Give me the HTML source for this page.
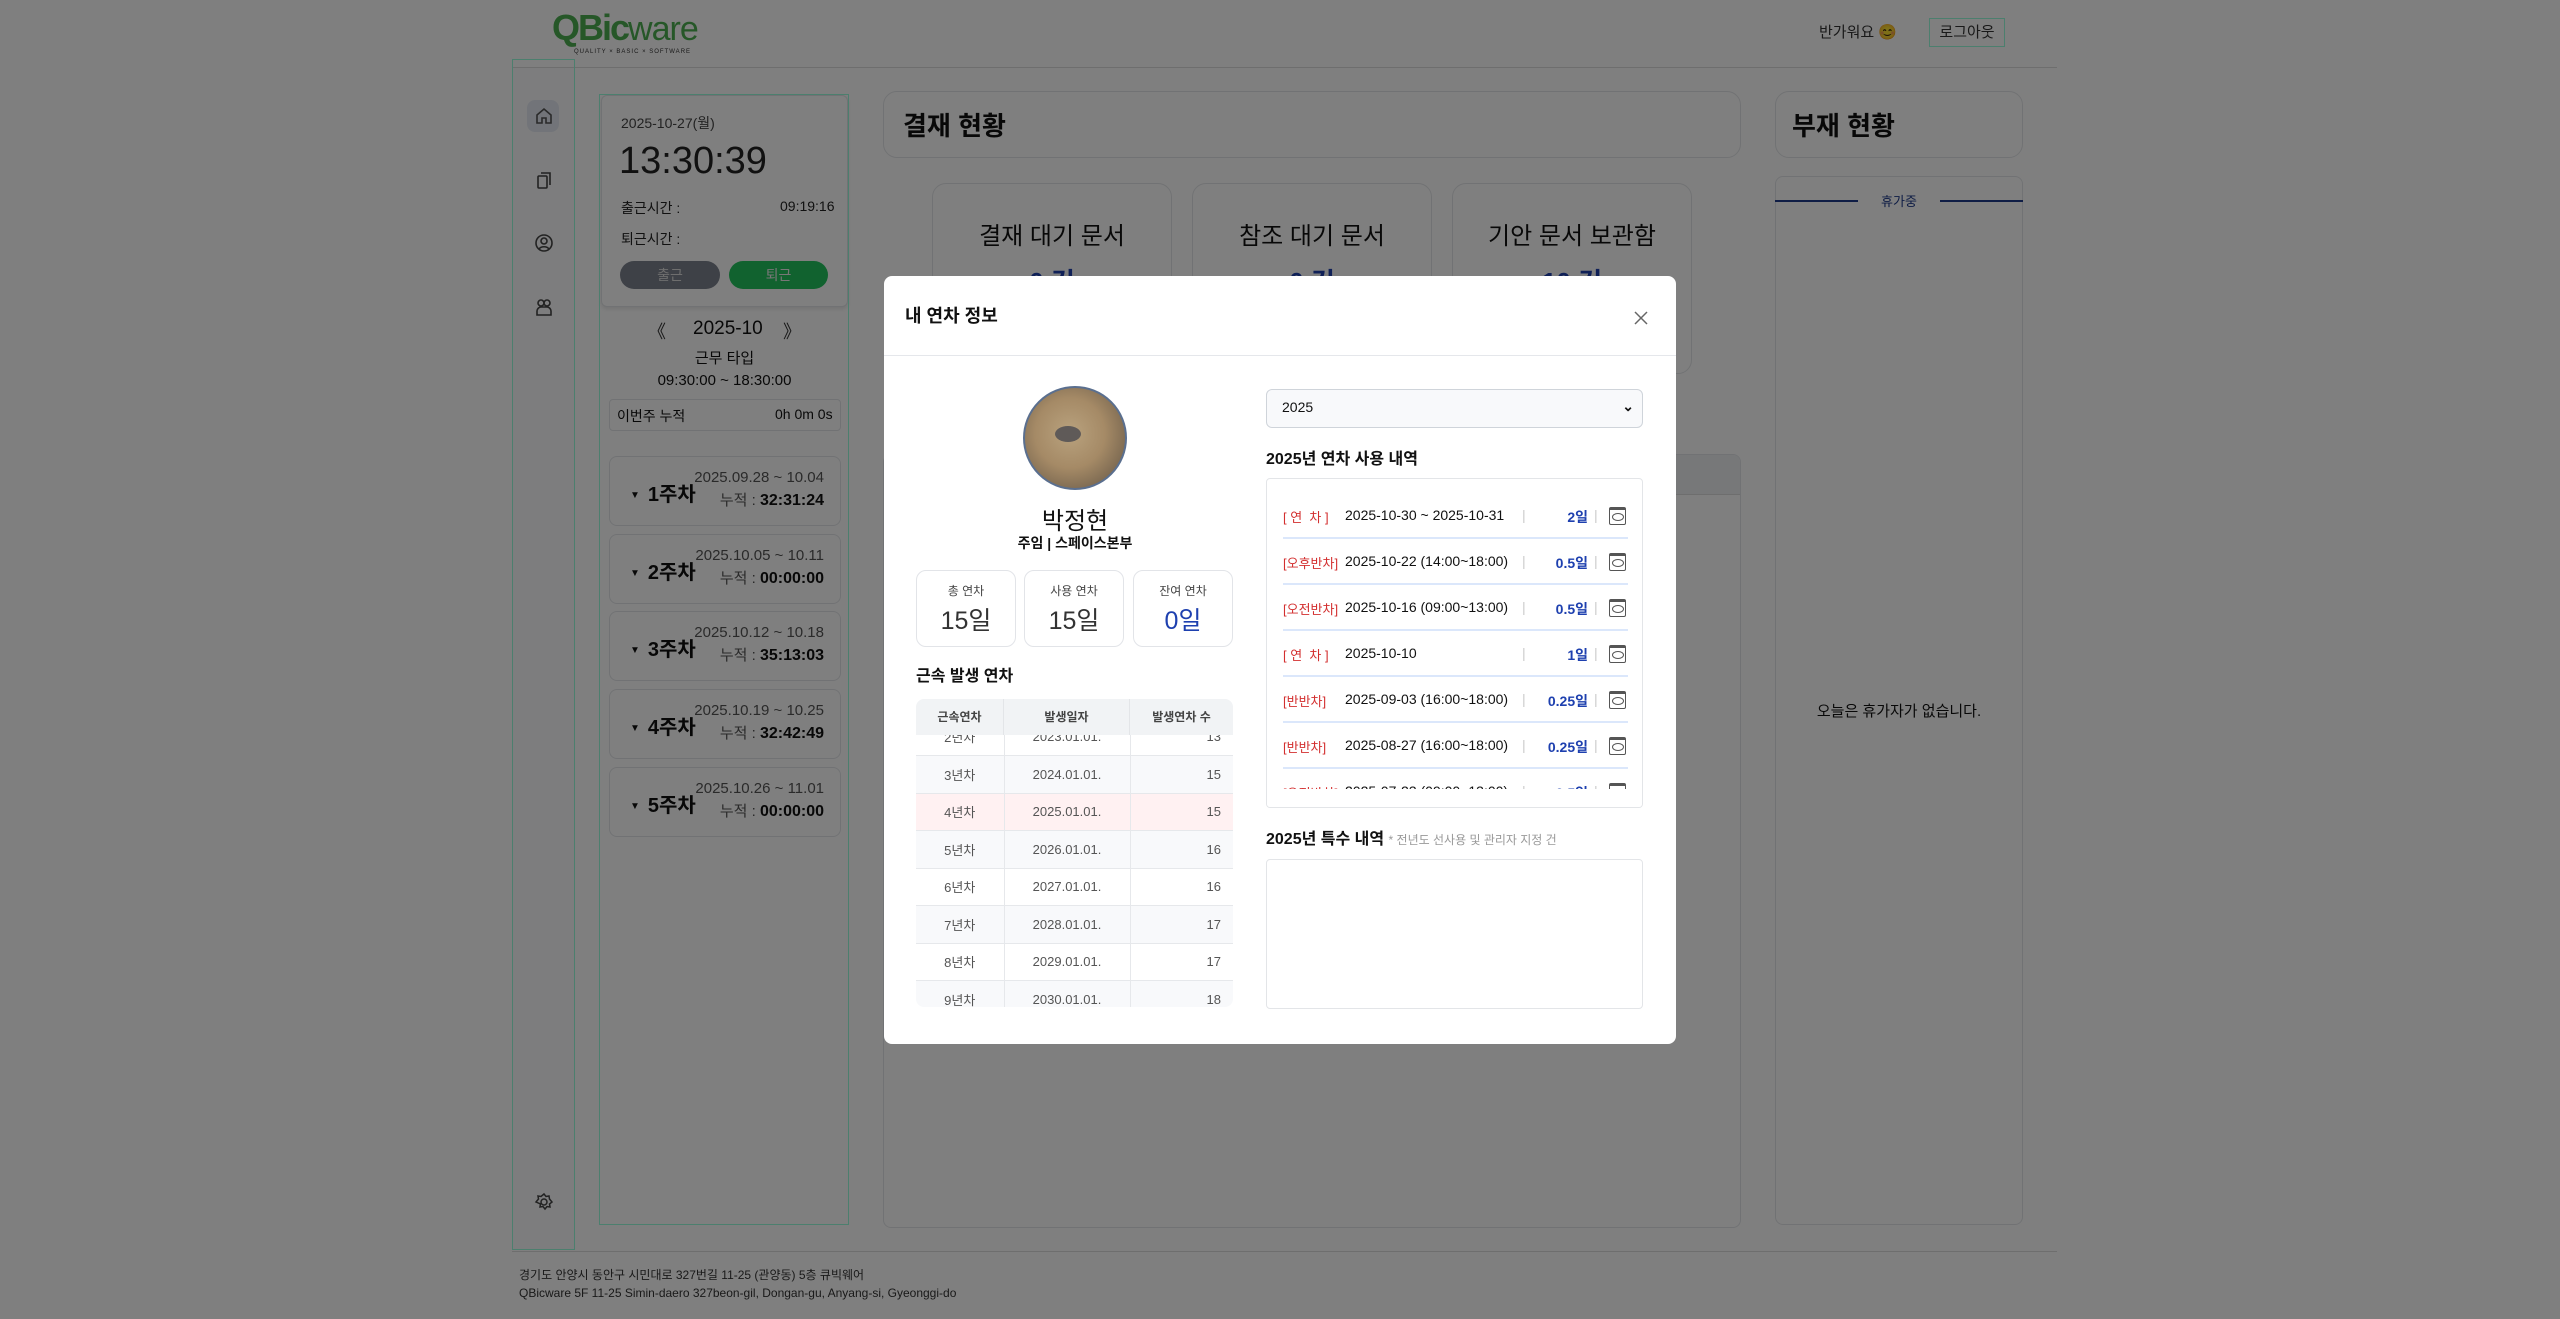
<!DOCTYPE html>
<html><head><meta charset="utf-8"><style>
*{box-sizing:border-box;margin:0;padding:0}
body{width:2560px;height:1319px;position:relative;overflow:hidden;background:#fff;font-family:"Liberation Sans","Noto Sans CJK KR",sans-serif;color:#111}
.a{position:absolute}
.card{position:absolute;border:1px solid #e3e5e8;border-radius:14px;background:#fff}
.ov{position:absolute;left:0;top:0;width:2560px;height:1319px;background:rgba(0,0,0,.5)}
.c{text-align:center}
.wk{position:absolute;left:609px;width:232px;height:70px;border:1px solid #e3e5e8;border-radius:8px;background:#fff}
.wk .t{position:absolute;left:20px;top:21px;font-size:20px;font-weight:bold}
.wk .t i{font-style:normal;font-size:10px;vertical-align:middle;margin-right:8px}
.wk .d{position:absolute;right:16px;top:9px;font-size:15px;color:#555;text-align:right;line-height:23px}
.wk .d b{font-size:16px;color:#111}
.m{position:absolute;left:884px;top:276px;width:792px;height:768px;background:#fff;border-radius:8px}
.st{position:absolute;top:294px;width:100px;height:77px;border:1px solid #e2e4e8;border-radius:10px;text-align:center}
.st .l{font-size:12px;color:#444;margin-top:11px}
.st .v{font-size:25px;color:#333;margin-top:2px}
table{border-collapse:collapse;width:317px;font-size:13px;color:#555}
td{height:37.5px;border-right:1px solid #e6e8eb;border-bottom:1px solid #e6e8eb;text-align:center}
td:last-child{border-right:none;text-align:right;padding-right:12px}
.row{position:absolute;left:16px;width:345px;height:46px;font-size:14px;border-bottom:2px solid #dbe7fb}
.row span{position:absolute;top:14px;white-space:nowrap}
.tag{left:0;color:#d32f2f;font-size:13px}
.dt{left:62px;color:#111}
.p1{left:239px;color:#ccc}
.dy{right:40px;color:#1e40af;font-weight:bold}
.p2{left:311px;color:#ccc}
.eye{position:absolute;left:326px;top:14px;width:17px;height:18px;border:1.5px solid #555;border-radius:2px;border-top-width:3px}
.eye:after{content:"";position:absolute;left:2px;top:3px;width:10px;height:6px;border:1.3px solid #555;border-radius:50%}
</style></head><body>
<!-- header -->
<div class="a" style="left:552px;top:8px;width:160px;height:46px;white-space:nowrap">
<span style="font-size:36px;color:#4caf50;font-weight:bold;letter-spacing:-2px;line-height:40px">QBic</span><span style="font-size:34px;color:#4caf50;line-height:40px;letter-spacing:-1px">ware</span>
<div style="font-size:6px;color:#333;margin-left:22px;letter-spacing:1px">QUALITY × BASIC × SOFTWARE</div></div>
<div class="a" style="left:1819px;top:21px;font-size:15px;color:#333">반가워요 😊</div>
<div class="a" style="left:1929px;top:18px;width:76px;height:29px;border:1px solid #9fd;font-size:15px;color:#333;text-align:center;line-height:27px">로그아웃</div>
<div class="a" style="left:512px;top:67px;width:1545px;height:1px;background:#ddd"></div>
<!-- sidebar -->
<div class="a" style="left:513px;top:68px;width:62px;height:1182px;background:#fafbfc;border-right:1px solid #e5e7eb"></div>
<div class="a" style="left:527px;top:100px;width:32px;height:32px;border-radius:8px;background:#e4e9f2"></div>
<svg class="a" style="left:534px;top:106px" width="20" height="20" viewBox="0 0 20 20" fill="none" stroke="#555" stroke-width="1.6"><path d="M3 9L10 3l7 6v8H12v-5H8v5H3z"/></svg>
<svg class="a" style="left:534px;top:170px" width="20" height="20" viewBox="0 0 20 20" fill="none" stroke="#444" stroke-width="1.6"><rect x="4" y="6" width="9" height="12" rx="1"/><path d="M7 3h9v12"/></svg>
<svg class="a" style="left:534px;top:233px" width="20" height="20" viewBox="0 0 20 20" fill="none" stroke="#444" stroke-width="1.6"><circle cx="10" cy="10" r="8"/><circle cx="10" cy="8" r="3"/><path d="M5 16c2-3 8-3 10 0"/></svg>
<svg class="a" style="left:534px;top:297px" width="20" height="20" viewBox="0 0 20 20" fill="none" stroke="#444" stroke-width="1.6"><circle cx="7" cy="6" r="3"/><circle cx="13" cy="6" r="3"/><path d="M3 18v-4c0-2 2-4 4-4h6c2 0 4 2 4 4v4z"/></svg>
<svg class="a" style="left:534px;top:1192px" width="20" height="20" viewBox="0 0 20 20" fill="none" stroke="#444" stroke-width="1.5"><circle cx="10" cy="10" r="3"/><path d="M10 2l2 2.5 3-.5.5 3L18 10l-2.5 2 .5 3-3-.5-2 2.5-2-2.5-3 .5.5-3L2 10l2.5-3-.5-3 3 .5z"/></svg>
<!-- middle panel -->
<div class="card" style="left:601px;top:95px;width:247px;height:212px;border-radius:6px;box-shadow:0 2px 4px rgba(0,0,0,.1)"></div>
<div class="a" style="left:621px;top:113px;font-size:14px;color:#444">2025-10-27(월)</div>
<div class="a" style="left:619px;top:140px;font-size:38px;color:#222">13:30:39</div>
<div class="a" style="left:621px;top:198px;font-size:14px;color:#222">출근시간 :</div>
<div class="a" style="left:780px;top:198px;font-size:14px;color:#222">09:19:16</div>
<div class="a" style="left:621px;top:229px;font-size:14px;color:#222">퇴근시간 :</div>
<div class="a c" style="left:620px;top:261px;width:100px;height:28px;border-radius:14px;background:#7c828e;color:#ddd;font-size:14px;line-height:28px">출근</div>
<div class="a c" style="left:729px;top:261px;width:99px;height:28px;border-radius:14px;background:#22c55e;color:#eee;font-size:14px;line-height:28px">퇴근</div>
<div class="a" style="left:648px;top:318px;font-size:18px;color:#333">《</div>
<div class="a" style="left:693px;top:318px;font-size:19px;color:#111">2025-10</div>
<div class="a" style="left:783px;top:318px;font-size:18px;color:#333">》</div>
<div class="a c" style="left:601px;top:347px;width:247px;font-size:15px">근무 타입</div>
<div class="a c" style="left:601px;top:372px;width:247px;font-size:15px">09:30:00 ~ 18:30:00</div>
<div class="a" style="left:609px;top:399px;width:232px;height:32px;border:1px solid #e3e5e8;border-radius:4px"></div>
<div class="a" style="left:617px;top:406px;font-size:14px">이번주 누적</div>
<div class="a" style="left:775px;top:406px;font-size:14px">0h 0m 0s</div>
<div class="wk" style="top:456px"><span class="t"><i>▼</i>1주차</span><div class="d">2025.09.28 ~ 10.04<br>누적 : <b>32:31:24</b></div></div>
<div class="wk" style="top:534px"><span class="t"><i>▼</i>2주차</span><div class="d">2025.10.05 ~ 10.11<br>누적 : <b>00:00:00</b></div></div>
<div class="wk" style="top:611px"><span class="t"><i>▼</i>3주차</span><div class="d">2025.10.12 ~ 10.18<br>누적 : <b>35:13:03</b></div></div>
<div class="wk" style="top:689px"><span class="t"><i>▼</i>4주차</span><div class="d">2025.10.19 ~ 10.25<br>누적 : <b>32:42:49</b></div></div>
<div class="wk" style="top:767px"><span class="t"><i>▼</i>5주차</span><div class="d">2025.10.26 ~ 11.01<br>누적 : <b>00:00:00</b></div></div>
<div class="a" style="left:599px;top:94px;width:250px;height:1131px;border:1px solid #9fd"></div>
<div class="a" style="left:512px;top:59px;width:63px;height:1191px;border:1px solid #9fd"></div>
<!-- main -->
<div class="card" style="left:883px;top:91px;width:858px;height:67px"></div>
<div class="a" style="left:903px;top:106px;font-size:26px;font-weight:bold">결재 현황</div>
<div class="card" style="left:932px;top:183px;width:240px;height:191px"></div>
<div class="card" style="left:1192px;top:183px;width:240px;height:191px"></div>
<div class="card" style="left:1452px;top:183px;width:240px;height:191px"></div>
<div class="a c" style="left:932px;top:216px;width:240px;font-size:24px">결재 대기 문서</div>
<div class="a c" style="left:1192px;top:216px;width:240px;font-size:24px">참조 대기 문서</div>
<div class="a c" style="left:1452px;top:216px;width:240px;font-size:24px">기안 문서 보관함</div>
<div class="a c" style="left:932px;top:262px;width:240px;font-size:26px;color:#1e40af;font-weight:bold">0 건</div>
<div class="a c" style="left:1192px;top:262px;width:240px;font-size:26px;color:#1e40af;font-weight:bold">0 건</div>
<div class="a c" style="left:1452px;top:262px;width:240px;font-size:26px;color:#1e40af;font-weight:bold">10 건</div>
<div class="card" style="left:883px;top:454px;width:858px;height:774px;border-radius:8px;overflow:hidden"><div style="height:40px;background:#eef0f3;border-bottom:1px solid #ddd"></div></div>
<div class="card" style="left:1775px;top:91px;width:248px;height:67px"></div>
<div class="a" style="left:1792px;top:106px;font-size:26px;font-weight:bold">부재 현황</div>
<div class="card" style="left:1775px;top:176px;width:248px;height:1049px;border-radius:8px"></div>
<div class="a" style="left:1775px;top:200px;width:83px;height:2px;background:#1e3a8a"></div>
<div class="a" style="left:1940px;top:200px;width:83px;height:2px;background:#1e3a8a"></div>
<div class="a c" style="left:1858px;top:191px;width:82px;font-size:13px;color:#1e3a8a">휴가중</div>
<div class="a c" style="left:1775px;top:700px;width:248px;font-size:15px">오늘은 휴가자가 없습니다.</div>
<!-- footer -->
<div class="a" style="left:512px;top:1251px;width:1545px;height:1px;background:#ddd"></div>
<div class="a" style="left:519px;top:1266px;font-size:12px;color:#333;line-height:18px">경기도 안양시 동안구 시민대로 327번길 11-25 (관양동) 5층 큐빅웨어<br>QBicware 5F 11-25 Simin-daero 327beon-gil, Dongan-gu, Anyang-si, Gyeonggi-do</div>
<div class="ov"></div>
<!-- modal -->
<div class="m">
<div class="a" style="left:21px;top:26px;font-size:18px;font-weight:bold">내 연차 정보</div>
<svg class="a" style="left:749px;top:34px" width="16" height="16" viewBox="0 0 16 16" stroke="#666" stroke-width="1.5"><path d="M2 2l12 12M14 2L2 14"/></svg>
<div class="a" style="left:0;top:79px;width:792px;height:1px;background:#e5e7eb"></div>
<div class="a" style="left:139px;top:110px;width:104px;height:104px;border-radius:50%;border:2px solid #5a6f8f;background:radial-gradient(circle at 45% 45%,#b9a27e 0,#a58a66 45%,#7d6a52 75%,#4d5a3e 100%)"></div>
<div class="a" style="left:171px;top:150px;width:26px;height:16px;border-radius:50%;background:#5f5a58"></div>
<div class="a c" style="left:0;top:225px;width:382px;font-size:24px">박정현</div>
<div class="a c" style="left:0;top:257px;width:382px;font-size:14px;font-weight:bold">주임 | 스페이스본부</div>
<div class="st" style="left:32px"><div class="l">총 연차</div><div class="v">15일</div></div>
<div class="st" style="left:140px"><div class="l">사용 연차</div><div class="v">15일</div></div>
<div class="st" style="left:249px"><div class="l">잔여 연차</div><div class="v" style="color:#1e40af">0일</div></div>
<div class="a" style="left:32px;top:386px;font-size:16px;font-weight:bold">근속 발생 연차</div>
<div class="a" style="left:32px;top:423px;width:317px;height:308px;border-radius:8px;overflow:hidden">
<div style="position:absolute;top:36px;left:0;width:317px;height:272px;overflow:hidden"><table style="position:absolute;top:-17px">
<colgroup><col style="width:88px"><col style="width:126px"><col style="width:103px"></colgroup>
<tr style="background:#fff"><td>2년차</td><td>2023.01.01.</td><td>13</td></tr>
<tr style="background:#f8f9fb"><td>3년차</td><td>2024.01.01.</td><td>15</td></tr>
<tr style="background:#fff1f2"><td>4년차</td><td>2025.01.01.</td><td>15</td></tr>
<tr style="background:#f8f9fb"><td>5년차</td><td>2026.01.01.</td><td>16</td></tr>
<tr style="background:#fff"><td>6년차</td><td>2027.01.01.</td><td>16</td></tr>
<tr style="background:#f8f9fb"><td>7년차</td><td>2028.01.01.</td><td>17</td></tr>
<tr style="background:#fff"><td>8년차</td><td>2029.01.01.</td><td>17</td></tr>
<tr style="background:#f8f9fb"><td>9년차</td><td>2030.01.01.</td><td>18</td></tr>
</table></div>
<div style="position:absolute;top:0;left:0;width:317px;height:36px;background:#f1f3f5;font-size:12px;font-weight:bold;color:#444;line-height:36px">
<span style="position:absolute;left:0;width:88px;text-align:center;border-right:1px solid #e3e5e8">근속연차</span><span style="position:absolute;left:88px;width:126px;text-align:center;border-right:1px solid #e3e5e8">발생일자</span><span style="position:absolute;left:214px;width:103px;text-align:center">발생연차 수</span></div>
</div>
<div class="a" style="left:382px;top:113px;width:377px;height:39px;border:1px solid #cfd4da;border-radius:6px;background:#f8f9fb;font-size:14px;padding:9px 0 0 15px">2025<span style="position:absolute;right:8px;top:8px;font-size:14px;font-weight:bold">⌄</span></div>
<div class="a" style="left:382px;top:169px;font-size:16px;font-weight:bold">2025년 연차 사용 내역</div>
<div class="a" style="left:382px;top:202px;width:377px;height:330px;border:1px solid #e3e5e8;border-radius:4px;overflow:hidden">
<div class="row" style="top:14px"><span class="tag">[ 연 &nbsp;차 ]</span><span class="dt">2025-10-30 ~ 2025-10-31</span><span class="p1">|</span><span class="dy">2일</span><span class="p2">|</span><i class="eye"></i></div>
<div class="row" style="top:60px"><span class="tag">[오후반차]</span><span class="dt">2025-10-22 (14:00~18:00)</span><span class="p1">|</span><span class="dy">0.5일</span><span class="p2">|</span><i class="eye"></i></div>
<div class="row" style="top:106px"><span class="tag">[오전반차]</span><span class="dt">2025-10-16 (09:00~13:00)</span><span class="p1">|</span><span class="dy">0.5일</span><span class="p2">|</span><i class="eye"></i></div>
<div class="row" style="top:152px"><span class="tag">[ 연 &nbsp;차 ]</span><span class="dt">2025-10-10</span><span class="p1">|</span><span class="dy">1일</span><span class="p2">|</span><i class="eye"></i></div>
<div class="row" style="top:198px"><span class="tag">[반반차]</span><span class="dt">2025-09-03 (16:00~18:00)</span><span class="p1">|</span><span class="dy">0.25일</span><span class="p2">|</span><i class="eye"></i></div>
<div class="row" style="top:244px"><span class="tag">[반반차]</span><span class="dt">2025-08-27 (16:00~18:00)</span><span class="p1">|</span><span class="dy">0.25일</span><span class="p2">|</span><i class="eye"></i></div>
<div class="row" style="top:290px;border:none"><span class="tag">[오전반차]</span><span class="dt">2025-07-23 (09:00~13:00)</span><span class="p1">|</span><span class="dy">0.5일</span><span class="p2">|</span><i class="eye"></i></div>
<div style="position:absolute;left:0;top:310px;width:377px;height:20px;background:#fff"></div>
</div>
<div class="a" style="left:382px;top:549px;font-size:16px;font-weight:bold">2025년 특수 내역 <span style="font-size:12px;font-weight:normal;color:#999">* 전년도 선사용 및 관리자 지정 건</span></div>
<div class="a" style="left:382px;top:583px;width:377px;height:150px;border:1px solid #e3e5e8;border-radius:4px"></div>
</div>
</body></html>
